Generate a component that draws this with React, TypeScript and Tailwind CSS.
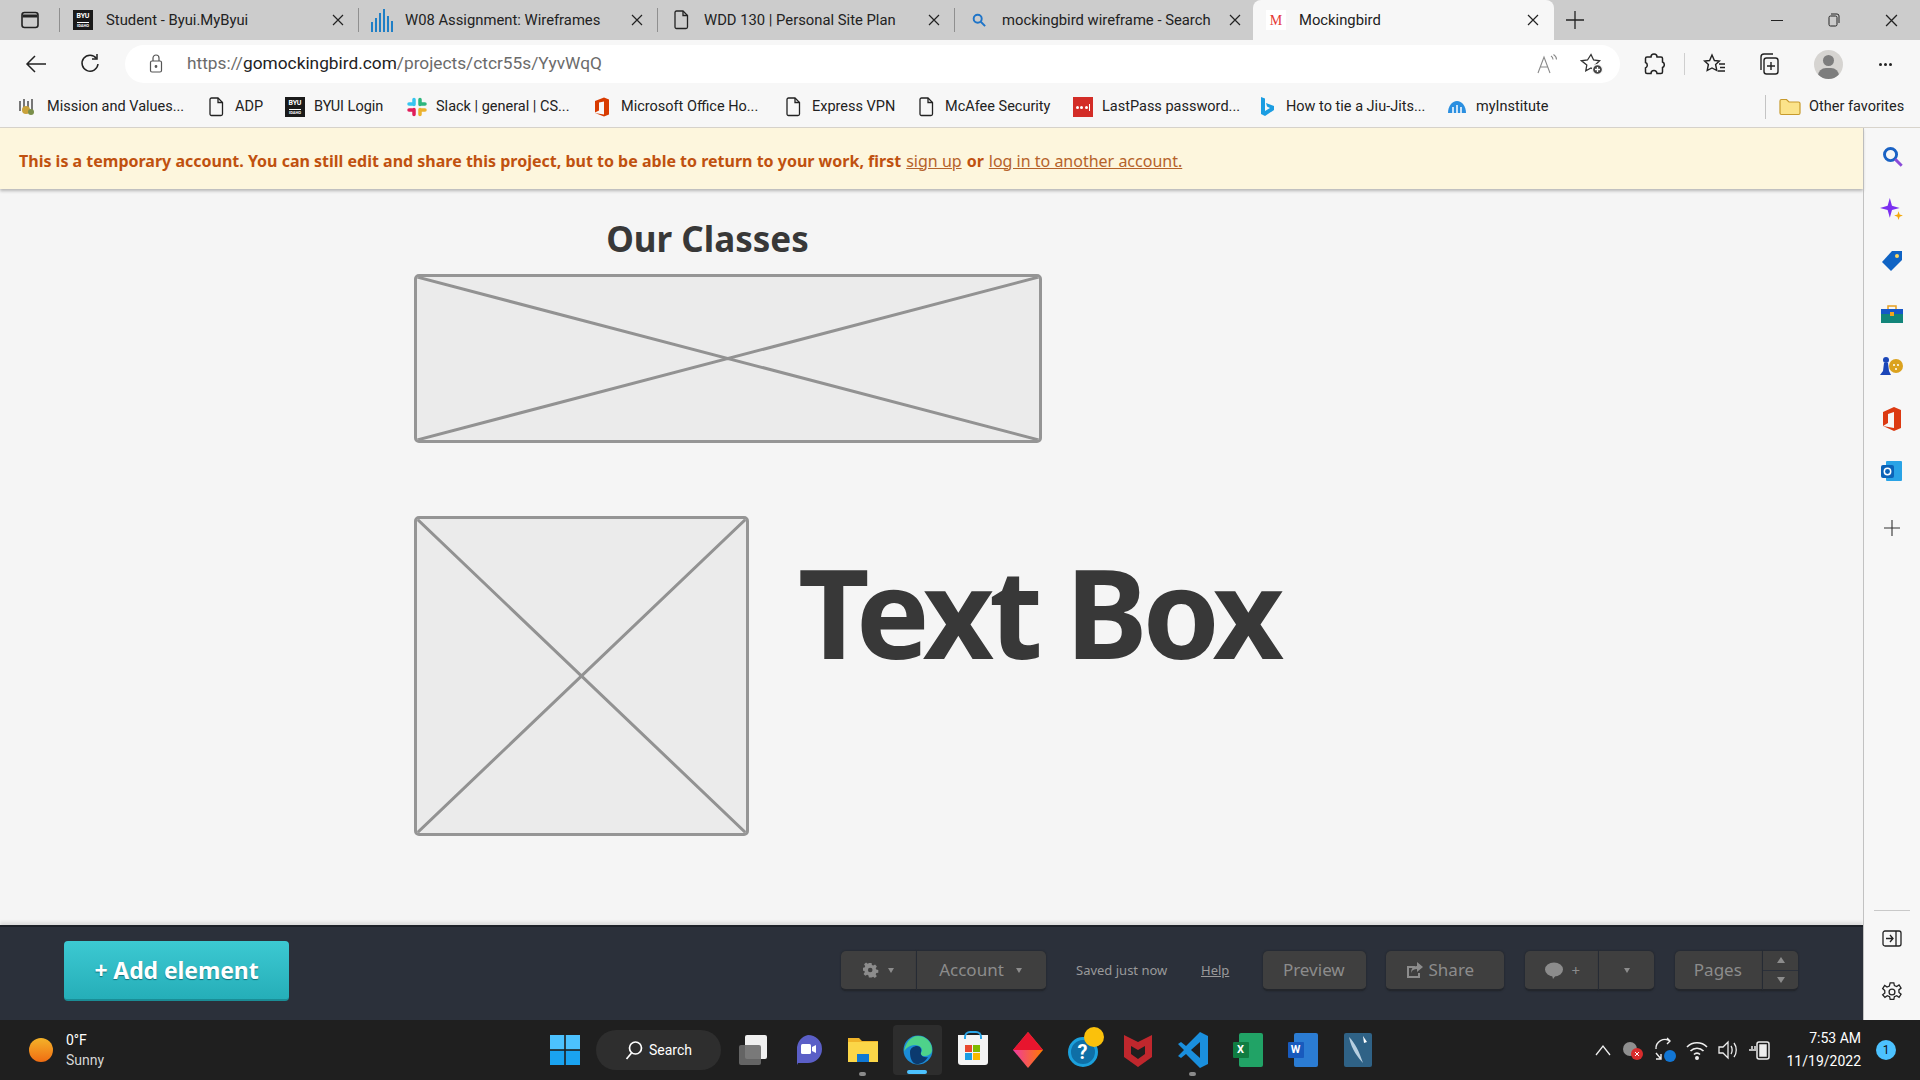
import React from "react";

const Doc = () => (
  <svg width="16" height="20" viewBox="0 0 16 20" fill="none" stroke="#222" strokeWidth="1.3"><path d="M2 2.5 a1.5 1.5 0 0 1 1.5-1.5H10l4.5 4.5V17a1.5 1.5 0 0 1-1.5 1.5H3.5A1.5 1.5 0 0 1 2 17Z" /><path d="M10 1v4.5h4.5" /></svg>
);
const Byu = () => (
  <div className="w-[20px] h-[20px] bg-[#1a1a1a] flex flex-col items-center justify-center text-white leading-none font-bold">
    <span className="text-[7px]">BYU</span>
    <span className="text-[4px] mt-[2px] border-t border-white pt-[1px]">IDAHO</span>
  </div>
);
const X = ({ c = "#222", s = 12 }: { c?: string; s?: number }) => (
  <svg width={s} height={s} viewBox="0 0 12 12" stroke={c} strokeWidth="1.2"><path d="M1 1l10 10M11 1L1 11" /></svg>
);
const Bars = () => (
  <svg width="22" height="24" viewBox="0 0 22 24" fill="#1f7fc6"><rect x="0" y="14" width="2" height="10" /><rect x="4" y="10" width="2" height="14" /><rect x="8" y="5" width="2" height="19" /><rect x="12" y="1" width="2" height="23" /><rect x="16" y="8" width="2" height="16" /><rect x="20" y="13" width="2" height="11" /></svg>
);
const Mag = ({ c = "#1e74c8", s = 16, h }: { c?: string; s?: number; h?: string }) => (
  <svg width={s} height={s} viewBox="0 0 16 16" fill="none" stroke={c} strokeWidth="2.2"><circle cx="6.5" cy="6.5" r="4.6" /><path d="M10 10l5 5" stroke={h ?? c} /></svg>
);

function Tab({ icon, title, w, active }: { icon: React.ReactNode; title: string; w: string; active?: boolean }) {
  return (
    <div className={`${w} h-[40px] flex items-center relative ${active ? "bg-[#f7f7f7] rounded-t-[8px]" : ""}`}>
      <div className="w-[46px] shrink-0 flex justify-center">{icon}</div>
      <span className="flex-1 text-[14.8px] text-[#222] whitespace-nowrap overflow-hidden">{title}</span>
      <div className={`w-[41px] shrink-0 flex justify-center ${active ? "pr-[2px]" : "pl-[1px]"}`}><X /></div>
    </div>
  );
}
const Sep = () => <div className="w-px h-[24px] bg-[#8f8f8f] shrink-0" />;

function TabBar() {
  return (
    <div className="h-[40px] bg-[#cccccc] flex items-center">
      <div className="w-[59px] shrink-0 flex justify-center pl-[1px]">
        <svg width="20" height="20" viewBox="0 0 20 20" fill="none" stroke="#222" strokeWidth="1.6"><rect x="2" y="2.5" width="16" height="15" rx="2.5" /><path d="M2.5 6h15" strokeWidth="3" /></svg>
      </div>
      <Sep />
      <Tab w="w-[298px]" icon={<Byu />} title="Student - Byui.MyByui" />
      <Sep />
      <Tab w="w-[298px]" icon={<Bars />} title="W08 Assignment: Wireframes" />
      <Sep />
      <Tab w="w-[296px]" icon={<Doc />} title="WDD 130 | Personal Site Plan" />
      <Sep />
      <div className="w-[298px] h-[40px] flex items-center">
        <div className="w-[47px] shrink-0 flex justify-center"><Mag s={14} /></div>
        <span className="flex-1 text-[14.8px] text-[#222] whitespace-nowrap overflow-hidden">mockingbird wireframe - Search</span>
        <div className="w-[29px] shrink-0 flex justify-center pr-[8px]"><X /></div>
      </div>
      <Tab w="w-[301px]" active icon={<span className="w-[20px] h-[20px] bg-white text-[#e53935] text-[14px] flex items-center justify-center font-['Liberation_Serif',serif]">M</span>} title="Mockingbird" />
      <div className="w-[42px] flex justify-center">
        <svg width="18" height="18" viewBox="0 0 18 18" stroke="#222" strokeWidth="1.3"><path d="M9 0v18M0 9h18" /></svg>
      </div>
      <div className="flex-1 flex justify-end items-center pr-[22px] gap-[45px]">
        <div className="w-[12px] h-px bg-[#222]" />
        <svg width="12" height="14" viewBox="0 0 12 14" fill="none" stroke="#222"><rect x="1" y="3" width="8" height="10" rx="1.5" /><path d="M3 1h6a2 2 0 0 1 2 2v7" /></svg>
        <X s={13} />
      </div>
    </div>
  );
}

function Toolbar() {
  return (
    <div className="h-[45px] pt-[3px] bg-[#f7f7f7] flex items-center relative">
      <div className="w-[70px] flex justify-center pl-[1px]">
        <svg width="22" height="20" viewBox="0 0 22 20" fill="none" stroke="#222" strokeWidth="1.5"><path d="M21 10H2M10 2l-8 8 8 8" /></svg>
      </div>
      <div className="w-[40px] flex justify-center">
        <svg width="20" height="22" viewBox="0 0 20 22" fill="none" stroke="#222" strokeWidth="1.5"><path d="M16.5 5.5A8 8 0 1 0 18 11" /><path d="M17 1v5h-5" /></svg>
      </div>
      <div className="ml-[15px] w-[1495px] h-[38px] bg-white rounded-full flex items-center">
        <div className="w-[62px] flex justify-center">
          <svg width="14" height="20" viewBox="0 0 14 20" fill="none" stroke="#555" strokeWidth="1.2"><rect x="1.5" y="7" width="11" height="11" rx="1.5" /><path d="M4 7V4a3 3 0 0 1 6 0v3" /><circle cx="7" cy="12.5" r=".8" fill="#555" /></svg>
        </div>
        <span className="text-[17.3px] text-[#6b6b6b]">https://<span className="text-[#222]">gomockingbird.com</span>/projects/ctcr55s/YyvWqQ</span>
        <div className="ml-auto flex items-center gap-[22px] pr-[16px]">
          <svg width="22" height="22" viewBox="0 0 22 22" fill="none" stroke="#8a8a8a" strokeWidth="1.1"><path d="M2 20L8 4l6 16M4.5 14h7" /><path d="M15 3c1.5 1 2 2 2 3.500M17.500 1.500c2 1.300 3 3 3 5" /></svg>
          <svg width="24" height="24" viewBox="0 0 24 24" fill="none" stroke="#333" strokeWidth="1.3"><path d="M11 2.500l2.600 5.500 6 .8-4.400 4.200 1 5.700-5.200-2.800-5.200 2.800 1-5.700L1.500 8.800l6-.8Z" /><circle cx="17.500" cy="17.500" r="5" fill="#444" stroke="#f7f7f7" /><path d="M17.500 15v5M15 17.500h5" stroke="#fff" /></svg>
        </div>
      </div>
      <div className="w-[64px] flex justify-center pl-[3px]">
        <svg width="22" height="24" viewBox="0 0 22 24" fill="none" stroke="#222" strokeWidth="1.5"><path d="M8 5a3 3 0 0 1 6 0h4a1.500 1.500 0 0 1 1.500 1.500V10a3 3 0 0 1 0 5.500V20a1.500 1.500 0 0 1-1.500 1.500h-4a3 3 0 0 0-6 0H4A1.500 1.500 0 0 1 2.500 20V16a3 3 0 0 0 0-5.500V6.500A1.500 1.500 0 0 1 4 5Z" /></svg>
      </div>
      <div className="w-px h-[22px] bg-[#cfcfcf]" />
      <div className="w-[58px] flex justify-center">
        <svg width="24" height="24" viewBox="0 0 24 24" fill="none" stroke="#222" strokeWidth="1.4"><path d="M10 3l2.400 5.500 5 .5-3.800 3.500 1.200 6L10 16l-4.800 2.500 1.200-6L2.600 9l5-.5Z" /><path d="M17 12h6M18 15.500h5M16 19h7" /></svg>
      </div>
      <div className="w-[50px] flex justify-center">
        <svg width="24" height="26" viewBox="0 0 24 26" fill="none" stroke="#222" strokeWidth="1.4"><rect x="8" y="7" width="14" height="16" rx="2.500" /><path d="M15 11v8M11 15h8" /><path d="M5 19V6a3 3 0 0 1 3-3h9" /></svg>
      </div>
      <div className="w-[70px] flex justify-center">
        <div className="w-[29px] h-[29px] rounded-full bg-[#d6d4d1] relative overflow-hidden">
          <div className="absolute left-[9px] top-[5px] w-[11px] h-[11px] rounded-full bg-[#7d7d7d]" />
          <div className="absolute left-[4px] top-[18px] w-[21px] h-[16px] rounded-full bg-[#7d7d7d]" />
        </div>
      </div>
      <div className="w-[44px] flex justify-center gap-[2px]">
        <i className="w-[3px] h-[3px] rounded-full bg-[#222]" /><i className="w-[3px] h-[3px] rounded-full bg-[#222]" /><i className="w-[3px] h-[3px] rounded-full bg-[#222]" />
      </div>
    </div>
  );
}

const bookmarks: { w: string; label: string; icon: React.ReactNode }[] = [
  { w: "w-[188px]", label: "Mission and Values...", icon: <svg width="20" height="20" viewBox="0 0 20 20"><path d="M2 4v10M6 2v14M10 4v10M14 2v12" stroke="#777" strokeWidth="2" /><circle cx="8" cy="13" r="4" fill="#c9a23a" /><circle cx="13" cy="15" r="3" fill="#7a8f4a" /></svg> },
  { w: "w-[79px]", label: "ADP", icon: <Doc /> },
  { w: "w-[122px]", label: "BYUI Login", icon: <Byu /> },
  { w: "w-[185px]", label: "Slack | general | CS...", icon: <svg width="20" height="20" viewBox="0 0 20 20" strokeWidth="3.500" strokeLinecap="round" fill="none"><path d="M7 2.500v5M2 7h5" stroke="#36c5f0" /><path d="M13 2.500v5M13 7h5" stroke="#2eb67d" transform="translate(0 0)" /><path d="M13 12.500v5M13 13h5" stroke="#ecb22e" /><path d="M7 12.500v5M2 13h5" stroke="#e01e5a" /></svg> },
  { w: "w-[191px]", label: "Microsoft Office Ho...", icon: <svg width="16" height="20" viewBox="0 0 16 20"><path d="M1 4l9-3.500 5 2v15l-5 2-9-3.500 9 1.500V4.500L5 5.500v8L1 15.500Z" fill="#d83b01" /></svg> },
  { w: "w-[133px]", label: "Express VPN", icon: <Doc /> },
  { w: "w-[157px]", label: "McAfee Security", icon: <Doc /> },
  { w: "w-[184px]", label: "LastPass password...", icon: <div className="w-[20px] h-[20px] bg-[#d32d27] flex items-center justify-center gap-[1.500px]"><i className="w-[3px] h-[3px] rounded-full bg-white" /><i className="w-[3px] h-[3px] rounded-full bg-white" /><i className="w-[3px] h-[3px] rounded-full bg-white" /><i className="w-[1px] h-[7px] bg-white" /></div> },
  { w: "w-[190px]", label: "How to tie a Jiu-Jits...", icon: <svg width="16" height="20" viewBox="0 0 16 20"><path d="M2 0l4 1.500V14l5-3-3-1.500L7 6l8 3v4l-9 6-4-2Z" fill="#1b9de2" /></svg> },
  { w: "w-[305px]", label: "myInstitute", icon: <svg width="20" height="14" viewBox="0 0 20 14"><path d="M1 13C1 6 5 1 10 1s9 5 9 12Z" fill="#2b8fe0" /><path d="M6 13V7M10 13V5M14 13V7" stroke="#fff" strokeWidth="1.500" /></svg> },
];

function Bookmarks() {
  return (
    <div className="h-[43px] pt-[2px] bg-[#f7f7f7] flex items-center pl-[18px] border-b border-[#d8d4cc]">
      {bookmarks.map((b) => (
        <div key={b.label} className={`${b.w} shrink-0 flex items-center`}>
          <div className="w-[20px] flex justify-center mr-[9px]">{b.icon}</div>
          <span className="text-[14.5px] text-[#222] whitespace-nowrap">{b.label}</span>
        </div>
      ))}
      <div className="w-px h-[24px] bg-[#c4c4c4] ml-[13px]" />
      <div className="ml-[13px] flex items-center gap-[8px]">
        <svg width="22" height="18" viewBox="0 0 22 18" fill="#fbe38a" stroke="#c79a2c" strokeWidth="1.200"><path d="M1 3a1.500 1.500 0 0 1 1.500-1.500h5L10 4h9.500A1.500 1.500 0 0 1 21 5.500V15a1.500 1.500 0 0 1-1.500 1.500h-17A1.500 1.500 0 0 1 1 15Z" /></svg>
        <span className="text-[14.5px] text-[#222] whitespace-nowrap">Other favorites</span>
      </div>
    </div>
  );
}

function SideIcon({ children }: { children: React.ReactNode }) {
  return <div className="h-[52.500px] flex items-center justify-center">{children}</div>;
}

function Sidebar() {
  return (
    <div className="w-[57px] shrink-0 bg-[#f7f7f7] border-l border-[#c2c2c2] flex flex-col pb-[2px]">
      <div className="pt-[2px]">
        <SideIcon><Mag c="#1a62c4" h="#8a4bd8" s={21} /></SideIcon>
        <SideIcon><svg width="24" height="24" viewBox="0 0 22 22"><path d="M9 1l2 7 7 2-7 2-2 7-2-7-7-2 7-2Z" fill="#7b2ff0" /><path d="M17 13l1 3 3 1-3 1-1 3-1-3-3-1 3-1Z" fill="#f4a90c" /></svg></SideIcon>
        <SideIcon><svg width="22" height="22" viewBox="0 0 22 22"><path d="M11 1h10v9L10 21 1 12Z" fill="#0f63c4" /><circle cx="16" cy="6" r="2" fill="#ffd75e" /></svg></SideIcon>
        <SideIcon><svg width="22" height="18" viewBox="0 0 22 18"><path d="M7 4V1h8v3" fill="none" stroke="#e8a020" strokeWidth="1.500" /><rect y="4" width="22" height="5" fill="#1658c8" /><rect y="9" width="22" height="9" fill="#12857a" /><rect x="9" y="7" width="4" height="4" fill="#f2a51e" /></svg></SideIcon>
        <SideIcon><svg width="24" height="20" viewBox="0 0 24 20"><circle cx="16" cy="10" r="7" fill="#dba21f" /><circle cx="6" cy="4" r="3" fill="#1b46b8" /><path d="M4 7h4l1 8 2 4H0l3-4Z" fill="#1b46b8" /><circle cx="14" cy="9" r="1" fill="#fff" /><circle cx="18" cy="9" r="1" fill="#fff" /><circle cx="16" cy="13" r="1" fill="#fff" /></svg></SideIcon>
        <SideIcon><svg width="20" height="24" viewBox="0 0 20 24"><path d="M1 5l11-5 7 3v18l-7 3-11-5 11 2V5L6 7v9l-5 3Z" fill="#dc3a12" /></svg></SideIcon>
        <SideIcon><svg width="22" height="22" viewBox="0 0 22 22"><rect x="5" y="1" width="16" height="20" rx="1" fill="#29a3e6" /><rect y="5" width="13" height="13" rx="2" fill="#0b63b8" /><circle cx="6.500" cy="11.500" r="3.200" fill="none" stroke="#fff" strokeWidth="1.500" /></svg></SideIcon>
        <div className="h-[52.500px] pt-[8px] flex items-center justify-center"><svg width="16" height="16" viewBox="0 0 16 16" stroke="#333" strokeWidth="1.100"><path d="M8 0v16M0 8h16" /></svg></div>
      </div>
      <div className="mt-auto mx-[10px] h-px bg-[#c9c9c9]" />
      <div className="h-[54px] flex items-center justify-center mt-[1px]">
        <svg width="20" height="18" viewBox="0 0 20 18" fill="none" stroke="#222" strokeWidth="1.300"><rect x="1" y="1" width="18" height="15" rx="2" /><path d="M14 1v15M4 8.500h7M8 5l3 3.500L8 12" /></svg>
      </div>
      <div className="h-[52px] flex items-center justify-center">
        <svg width="22" height="22" viewBox="0 0 24 24" fill="none" stroke="#222" strokeWidth="1.400"><circle cx="12" cy="12" r="3.200" /><path d="M10 2h4l.6 3 2.500 1 2.600-1.700 2.200 3.400-2.400 2 .1 2.700 2.300 2-2.200 3.400-2.600-1.700-2.500 1-.6 3h-4l-.6-3-2.500-1-2.600 1.700L1.800 15l2.400-2-.1-2.700-2.300-2 2.200-3.400 2.600 1.700 2.500-1Z" /></svg>
      </div>
    </div>
  );
}

function Placeholder({ w, h }: { w: string; h: string }) {
  return (
    <div className={`${w} ${h} relative bg-[#ebebeb] border-[3px] border-[#959595] rounded-[5px] shrink-0 overflow-hidden`}>
      <svg className="absolute inset-0 w-full h-full" preserveAspectRatio="none" viewBox="0 0 100 100">
        <path d="M0 0L100 100M100 0L0 100" stroke="#929292" strokeWidth="3" vectorEffect="non-scaling-stroke" />
      </svg>
    </div>
  );
}

const btn = "h-[40px] bg-[#3f3f3f] rounded-[5px] border-b-2 border-[#23262c] flex items-center justify-center text-[#8c8c8c] shadow-[0_0_2px_#1d2026] text-[17px]";
const Caret = () => <span className="inline-block w-0 h-0 border-x-[3px] border-x-transparent border-t-[5px] border-t-[#8c8c8c]" />;
const CaretUp = () => <span className="inline-block w-0 h-0 border-x-[4px] border-x-transparent border-b-[6px] border-b-[#8c8c8c]" />;
const CaretDown = () => <span className="inline-block w-0 h-0 border-x-[4px] border-x-transparent border-t-[6px] border-t-[#8c8c8c]" />;

function BottomBar() {
  return (
    <div className="h-[95px] pb-[5px] bg-[#2b303a] border-t-[2px] border-[#1d2128] shadow-[0_-3px_3px_#dddddd] flex items-center pl-[64px] font-['Noto_Sans',sans-serif]">
      <div className="w-[225px] h-[60px] rounded-[4px] bg-gradient-to-b from-[#3cc9d2] to-[#25aeb8] border-b-2 border-[#1a8d96] flex items-center justify-center text-white text-[23px] font-bold [text-shadow:0_1px_1px_#0f6d75] tracking-[-0.1px]">+ Add element</div>
      <div className={`${btn} ml-[552px] w-[76px] rounded-r-none gap-[9px] border-r border-r-[#2b303a]`}>
        <svg width="16" height="16" viewBox="0 0 16 16" fill="#8c8c8c"><path d="M6.500 0h3l.4 2.200 1.500.7 2-1.200 2 2.200-1.300 1.800.7 1.600 2.200.4v3l-2.200.4-.7 1.500 1.200 2-2.200 2-1.800-1.300-1.600.7L9.500 16h-3l-.4-2.200-1.500-.7-2 1.200-2-2.200 1.300-1.800L1.700 8.800-.5 8.400v-3l2.200-.4.700-1.500-1.200-2L3.400-.5l1.800 1.300 1.600-.7Z" transform="translate(0 1) scale(.9)" /><circle cx="7.200" cy="8" r="2.300" fill="#3f3f3f" /></svg>
        <Caret />
      </div>
      <div className={`${btn} w-[129px] rounded-l-none gap-[12px] pr-[2px]`}>Account <Caret /></div>
      <span className="ml-[30px] text-[13px] text-[#9a9a9a] w-[93px] whitespace-nowrap">Saved just now</span>
      <span className="ml-[32px] text-[13px] text-[#9a9a9a] underline">Help</span>
      <div className={`${btn} ml-[34px] w-[103px] pr-[2px]`}>Preview</div>
      <div className={`${btn} ml-[20px] w-[118px] gap-[5px] pr-[11px]`}>
        <svg width="18" height="17" viewBox="0 0 18 17" fill="#8c8c8c"><path d="M1 4h8v2H3v8h9v-3h2v5H1Z" /><path d="M11 0l6 5-6 5V7C8 7 6 8 5 11c0-4 2-7 6-7Z" /></svg>
        Share
      </div>
      <div className={`${btn} ml-[21px] w-[74px] rounded-r-none gap-[8px] border-r border-r-[#2b303a]`}>
        <svg width="20" height="17" viewBox="0 0 20 17" fill="#8c8c8c"><ellipse cx="10" cy="7.500" rx="9" ry="7" /><path d="M8 13l1 4 3-4Z" /></svg>
        <span className="text-[15px]">+</span>
      </div>
      <div className={`${btn} w-[55px] rounded-l-none`}><Caret /></div>
      <div className={`${btn} ml-[21px] w-[88px] rounded-r-none border-r border-r-[#2b303a] pr-[2px]`}>Pages</div>
      <div className={`${btn} w-[35px] rounded-l-none flex-col`}>
        <div className="flex-1 w-full flex items-center justify-center border-b border-[#2b303a]"><CaretUp /></div>
        <div className="flex-1 w-full flex items-center justify-center"><CaretDown /></div>
      </div>
    </div>
  );
}

function Canvas() {
  const heading = "font-['Noto_Sans',sans-serif] font-bold text-[#383838]";
  return (
    <div className="flex-1 bg-[#f5f5f5] pl-[414px] overflow-hidden">
      <h2 className={`${heading} text-[35px] leading-[50px] h-[50px] mt-[25px] w-[587px] text-center`}>Our Classes</h2>
      <div className="mt-[10px]"><Placeholder w="w-[628px]" h="h-[169px]" /></div>
      <div className="mt-[73px] flex items-start">
        <Placeholder w="w-[335px]" h="h-[320px]" />
        <span className={`${heading} ml-[49px] mt-[8px] text-[124px] leading-[174px] tracking-[-5px] whitespace-nowrap`}>Text Box</span>
      </div>
    </div>
  );
}

function Taskbar() {
  const apps: React.ReactNode[] = [
    <div className="relative w-[28px] h-[30px]"><div className="absolute right-0 top-0 w-[22px] h-[24px] bg-[#f0f0f0] rounded-[2px]" /><div className="absolute left-0 bottom-0 w-[22px] h-[20px] bg-[#6b6b6b]/90 rounded-[2px]" /></div>,
    <svg width="30" height="32" viewBox="0 0 30 32"><path d="M15 1a14 14 0 0 1 0 28H5l-1 2V15A14 14 0 0 1 15 1Z" fill="#5b5fc7" /><rect x="8" y="10" width="10" height="10" rx="1.500" fill="#fff" /><path d="M19 13l4-2v8l-4-2Z" fill="#fff" /></svg>,
    <svg width="30" height="28" viewBox="0 0 30 28"><path d="M0 2h11l3 3h16v21H0Z" fill="#f0b429" /><path d="M0 6h30v20H0Z" fill="#fbd648" /><rect x="9" y="18" width="12" height="8" fill="#0f78d4" /></svg>,
    <svg width="30" height="30" viewBox="0 0 30 30"><circle cx="15" cy="15" r="14.500" fill="#1b8bd6" /><path d="M15 1a14 14 0 0 1 14 14c0 4-4 6-8 6-3 0-4-2-3-3 3-4-1-8-6-8-6 0-10 4-11 7C2 9 7 1 15 1Z" fill="#4ed28a" /><path d="M7 17c0-4 4-6 7-6 3 0 5 3 4 6-1 3 2 6 7 5-3 5-7 7-11 7-5 0-7-6-7-12Z" fill="#0b3a6f" /></svg>,
    <div className="w-[30px] h-[30px] bg-[#f4f4f4] rounded-b-[3px] relative"><div className="absolute left-[6px] top-[-4px] w-[18px] h-[8px] border-2 border-[#2ba6e8] border-b-0 rounded-t-[6px]" /><div className="absolute left-[7px] top-[10px] grid grid-cols-2 gap-[1px]"><i className="w-[7px] h-[7px] bg-[#e8492e]" /><i className="w-[7px] h-[7px] bg-[#7fba00]" /><i className="w-[7px] h-[7px] bg-[#1b9de2]" /><i className="w-[7px] h-[7px] bg-[#f9b900]" /></div></div>,
    <svg width="32" height="36" viewBox="0 0 32 36"><defs><linearGradient id="d" x1="0" x2="1" y1="0" y2="0"><stop offset="0" stopColor="#ee3aa0" /><stop offset="1" stopColor="#ff7a00" /></linearGradient></defs><path d="M16 0l15 18-15 18L1 18Z" fill="url(#d)" /><path d="M16 0l15 18H1Z" fill="#e8152e" /></svg>,
    <div className="relative w-[30px] h-[34px]"><div className="absolute left-0 bottom-0 w-[30px] h-[30px] rounded-full border-[3px] border-[#1ba0dc] bg-[#0f6fa6] text-white text-[20px] font-bold flex items-center justify-center leading-none">?</div><div className="absolute right-[-6px] top-[-6px] w-[20px] h-[20px] rounded-full bg-[#fbc10b]" /></div>,
    <svg width="28" height="34" viewBox="0 0 28 34"><path d="M0 2l14 7 14-7v22l-14 10L0 24Z" fill="#c0272d" /><path d="M7 13l7 4 7-4v8l-7 5-7-5Z" fill="#1f1f1f" /></svg>,
    <svg width="30" height="36" viewBox="0 0 30 36"><path d="M22 0l8 4v28l-8 4L8 22l-5 4-3-2 6-6-6-6 3-2 5 4Z" fill="#1a8fdd" /><path d="M22 10v16l-9-8Z" fill="#1f1f1f" /></svg>,
    <div className="w-[30px] h-[34px] relative"><div className="absolute right-0 top-0 w-[24px] h-[34px] bg-[#21a366] rounded-[2px]" /><div className="absolute left-0 top-[9px] w-[16px] h-[16px] bg-[#107c41] text-white text-[11px] font-bold flex items-center justify-center rounded-[1px]">X</div></div>,
    <div className="w-[30px] h-[34px] relative"><div className="absolute right-0 top-0 w-[24px] h-[34px] bg-[#2b7cd3] rounded-[2px]" /><div className="absolute left-0 top-[9px] w-[16px] h-[16px] bg-[#185abd] text-white text-[11px] font-bold flex items-center justify-center rounded-[1px]">W</div></div>,
    <svg width="28" height="34" viewBox="0 0 28 34"><rect width="28" height="34" rx="2" fill="#2f6286" /><path d="M5 4c6 6 10 14 14 26-5-6-11-12-14-26Z" fill="#b7cfe0" /><path d="M19 3l4 6-3 1Z" fill="#fff" /></svg>,
  ];
  return (
    <div className="h-[60px] bg-[#1f1f1f] flex items-center relative font-['Roboto',sans-serif]">
      <div className="pl-[29px] flex items-center gap-[13px] w-[550px]">
        <div className="w-[24px] h-[24px] rounded-full bg-gradient-to-b from-[#f3b229] to-[#ef6c12]" />
        <div className="text-[14px] leading-[20px] text-[#d6d6d6]"><div className="text-white">0°F</div><div>Sunny</div></div>
      </div>
      <svg width="30" height="30" viewBox="0 0 30 30" className="ml-0"><rect width="14.200" height="14.200" fill="#4cc2ff" /><rect x="15.800" width="14.200" height="14.200" fill="#4cc2ff" /><rect y="15.800" width="14.200" height="14.200" fill="#1aa3f0" /><rect x="15.800" y="15.800" width="14.200" height="14.200" fill="#1aa3f0" /></svg>
      <div className="ml-[16px] w-[125px] h-[40px] rounded-full bg-[#2e2e2e] flex items-center justify-center gap-[6px] text-[14px] text-white">
        <svg width="18" height="20" viewBox="0 0 18 20" fill="none" stroke="#fff" strokeWidth="1.700"><circle cx="10.500" cy="8" r="6" /><path d="M6.500 13L1.500 19" /></svg>
        Search
      </div>
      <div className="ml-[4px] flex items-center">
        {apps.map((a, i) => (
          <div key={i} className="w-[55px] h-[50px] relative flex items-center justify-center">
            {i === 3 && <div className="absolute left-[3px] w-[49px] h-[50px] rounded-[4px] bg-[#2d2d2d]" />}
            <div className="relative">{a}</div>
            {(i === 2 || i === 8) && <div className="absolute bottom-[-1px] left-[24px] w-[7px] h-[4px] rounded-full bg-[#8a8a8a]" />}
            {i === 3 && <div className="absolute bottom-[1px] left-[17px] w-[20px] h-[4px] rounded-full bg-[#4cc2ff]" />}
          </div>
        ))}
      </div>
      <div className="flex-1 flex items-center justify-end pr-[24px]">
        <div className="flex items-center gap-[9px] mr-[15px]">
          <svg width="20" height="12" viewBox="0 0 20 12" fill="none" stroke="#eee" strokeWidth="1.300"><path d="M3 11l7-9 7 9" /></svg>
          <svg width="22" height="22" viewBox="0 0 22 22"><circle cx="8" cy="10" r="7" fill="#8f8f8f" /><circle cx="15" cy="15" r="6" fill="#d82c2c" /><path d="M13 13l4 4M17 13l-4 4" stroke="#fff" /></svg>
          <svg width="24" height="30" viewBox="0 0 24 30" fill="none" stroke="#eee" strokeWidth="1.400"><path d="M3 14a9 9 0 0 1 14-8M14 3l3 3-3 3M3 18l5 6M3 24h5v-5" /><circle cx="17" cy="21" r="6" fill="#1276d4" stroke="none" /></svg>
          <svg width="22" height="20" viewBox="0 0 22 20" fill="none" stroke="#eee" strokeWidth="1.600"><path d="M1 7a14 14 0 0 1 20 0M4.500 11a9 9 0 0 1 13 0M8 14.500a4 4 0 0 1 6 0" /><circle cx="11" cy="18" r="1.200" fill="#eee" /></svg>
          <svg width="22" height="22" viewBox="0 0 22 22" fill="none" stroke="#eee" strokeWidth="1.300"><path d="M2 8h4l5-5v16l-5-5H2Z" /><path d="M14 7c1.500 2 1.500 6 0 8M17 4c3 4 3 10 0 14" /></svg>
          <svg width="24" height="22" viewBox="0 0 24 22" fill="none" stroke="#eee" strokeWidth="1.500"><rect x="9" y="3" width="12" height="17" rx="2" /><rect x="12" y="6" width="6" height="11" fill="#eee" /><path d="M1 11h7M4 7v3M7 7v3" /></svg>
        </div>
        <div className="text-[14px] leading-[23px] text-white text-right mr-[15px]"><div>7:53 AM</div><div>11/19/2022</div></div>
        <div className="w-[20px] h-[20px] rounded-full bg-[#4cc2ff] text-[#111] text-[12px] flex items-center justify-center">1</div>
      </div>
    </div>
  );
}

export default function App() {
  return (
    <div className="w-[1920px] h-[1080px] overflow-hidden flex flex-col font-['Roboto',sans-serif]">
      <TabBar />
      <Toolbar />
      <Bookmarks />
      <div className="flex-1 flex min-h-0">
        <div className="flex-1 flex flex-col min-w-0">
          <div className="h-[61px] pt-[4px] bg-[#fdf6dd] shadow-[0_2px_3px_#b5b5b5] relative z-10 flex items-center pl-[19px] text-[16px] font-['Noto_Sans',sans-serif] text-[#c0510f]">
            <span className="font-bold">This is a temporary account. You can still edit and share this project, but to be able to return to your work, first</span>
            <span className="ml-[5px] underline text-[#b5622a]">sign up</span>
            <span className="ml-[5px] font-bold">or</span>
            <span className="ml-[5px] underline text-[#b5622a]">log in to another account.</span>
          </div>
          <Canvas />
          <BottomBar />
        </div>
        <Sidebar />
      </div>
      <Taskbar />
    </div>
  );
}
